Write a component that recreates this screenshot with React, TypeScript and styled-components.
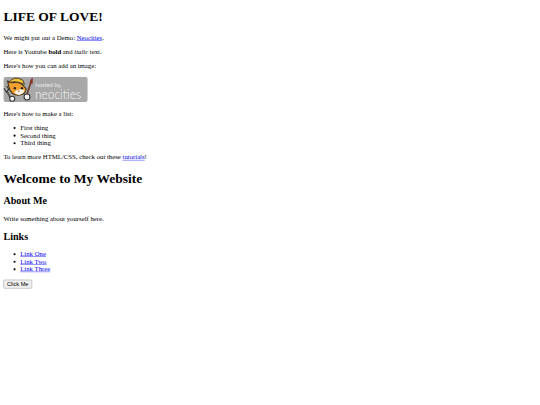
import React from 'react';
import styled, {createGlobalStyle} from "styled-components";

const GlobalStyle = createGlobalStyle`
html, body {
  margin: 0;
  background: #fff;
}
`

const NeocitiesBadge = () => (
    <BadgeLink href="#">
        <svg width="200" height="60" viewBox="0 0 200 60" role="img" aria-label="hosted by neocities">
            <rect x="0" y="0" width="200" height="60" rx="7" fill="#a8a8a8"/>
            <text x="76" y="25" fontFamily="Lato, sans-serif" fontSize="15" textLength="62" lengthAdjust="spacingAndGlyphs" fill="#e8e8e8">hosted by,</text>
            <text x="75" y="52" fontFamily="Lato, sans-serif" fontWeight="300" fontSize="33" textLength="109" lengthAdjust="spacingAndGlyphs" fill="#f6f6f6">neocities</text>
            {/* brush */}
            <path d="M55 44 L65 14" stroke="#6e3a30" strokeWidth="4"/>
            <path d="M62 15 Q64 6 69 1 Q71 8 69 17 Z" fill="#8a2f2a"/>
            {/* hard hat and face */}
            <path d="M13 24 L10 10 L22 14 Q34 10 44 18 L54 28 Q54 42 36 44 Q18 44 13 24 Z" fill="#f0a030" stroke="#40301c" strokeWidth="2.5"/>
            <path d="M12 14 Q26 -4 46 8 L50 18 Q30 8 12 14 Z" fill="#f4c838" stroke="#40301c" strokeWidth="2"/>
            <path d="M26 36 Q36 26 50 32 Q48 42 36 43 Q28 42 26 36 Z" fill="#fbf1df"/>
            <circle cx="27" cy="27" r="2.8" fill="#222"/>
            <circle cx="44" cy="27" r="2.8" fill="#222"/>
            <path d="M34 33 L39 33 L36.5 36 Z" fill="#7a2f2a"/>
            {/* paws */}
            <circle cx="56" cy="48" r="7" fill="#f6f6f6" stroke="#333" strokeWidth="2.5"/>
            {/* wrench */}
            <path d="M7 32 L20 56" stroke="#555" strokeWidth="4.5"/>
            <path d="M1 27 L7 36 L13 30 L8 22" fill="#a8a8a8" stroke="#333" strokeWidth="2.5"/>
            <circle cx="21" cy="52" r="6" fill="#f6f6f6" stroke="#333" strokeWidth="2.5"/>
        </svg>
    </BadgeLink>
);

export default function App() {
    return (
        <Viewport>
            <GlobalStyle/>
            <Page>
                <Title>LIFE OF LOVE!</Title>
                <Text>We might put out a Demo: <TextLink href="#">Neocities</TextLink>.</Text>
                <Text>Here is Youtube <strong>bold</strong> and <em>italic</em> text.</Text>
                <Text>Here's how you can add an image:</Text>
                <NeocitiesBadge/>
                <Text>Here's how to make a list:</Text>
                <List>
                    <li>First thing</li>
                    <li>Second thing</li>
                    <li>Third thing</li>
                </List>
                <Text>To learn more HTML/CSS, check out these <TextLink href="#">tutorials</TextLink>!</Text>
                <Title $spaced>Welcome to My Website</Title>
                <SubTitle>About Me</SubTitle>
                <Text>Write something about yourself here.</Text>
                <SubTitle>Links</SubTitle>
                <List>
                    <li><TextLink href="#">Link One</TextLink></li>
                    <li><TextLink href="#">Link Two</TextLink></li>
                    <li><TextLink href="#">Link Three</TextLink></li>
                </List>
                <ClickButton>Click Me</ClickButton>
            </Page>
        </Viewport>
    );
}

const Viewport = styled.div`
width: 540px;
height: 405px;
overflow: hidden;
`

// the reference is a 1280x960 page shrunk to 540x405
const Page = styled.main`
display: flow-root;
box-sizing: border-box;
width: 1280px;
height: 960px;
padding: 0 8px;
transform: scale(0.421875);
transform-origin: 0 0;
font-family: "Liberation Serif", "Times New Roman", serif;
color: #000;
`

const Title = styled.h1<{$spaced?: boolean}>`
font-size: 32px;
line-height: 37px;
margin: ${props => props.$spaced ? "23px" : "21.44px"} 0 21.44px;
`

const SubTitle = styled.h2`
font-size: 24px;
line-height: 27px;
margin: 19.2px 0;
`

const Text = styled.p`
font-size: 16px;
line-height: 18px;
margin: 16px 0;
`

const TextLink = styled.a`
color: #0000ee;
text-decoration: underline;
`

const BadgeLink = styled.a`
display: block;
height: 62px;
`

const List = styled.ul`
font-size: 16px;
line-height: 18px;
margin: 16px 0;
padding-left: 40px;
`

const ClickButton = styled.button`
display: block;
width: 68px;
height: 21px;
font-family: "Liberation Sans", Arial, sans-serif;
font-size: 13.33px;
padding: 0;
color: #000;
background: #efefef;
border: 1.5px solid #8a8a8a;
border-radius: 3px;
`
